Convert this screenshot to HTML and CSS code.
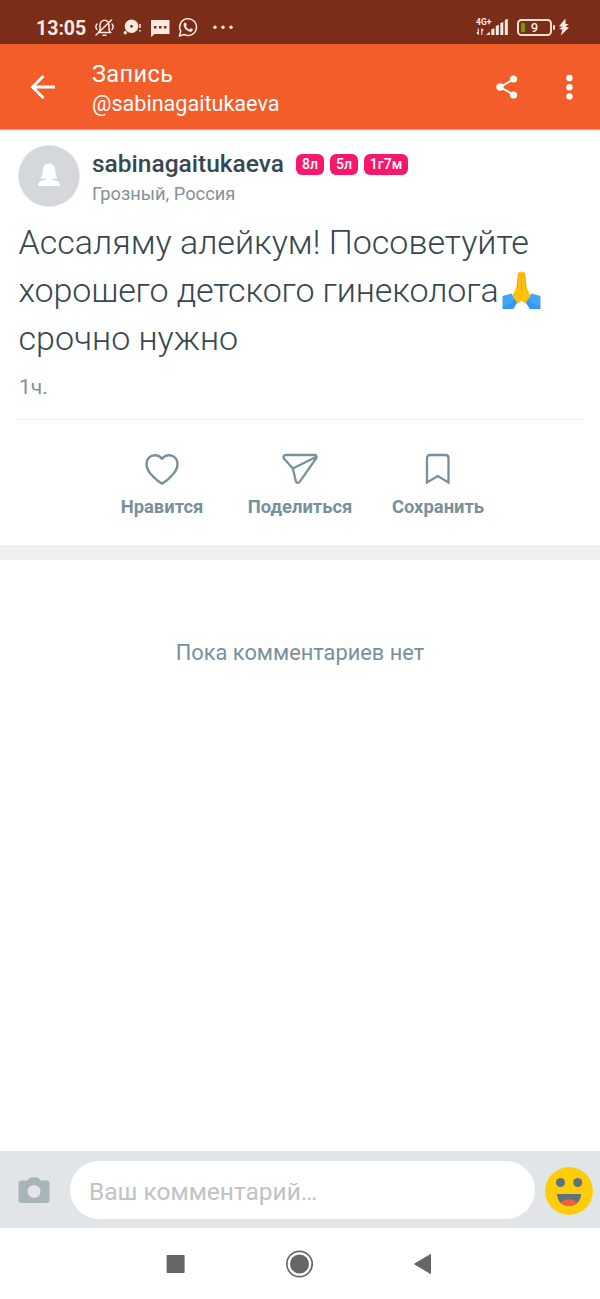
FILE: index.html
```html
<!DOCTYPE html>
<html lang="ru">
<head>
<meta charset="utf-8">
<title>Запись</title>
<link rel="stylesheet" href="styles.css">
</head>
<body>
<div class="screen">
  <div class="status">
    <span class="clock">13:05</span>
    <svg class="status-left" width="142" height="24" viewBox="94 16 142 24">
      <g fill="none" stroke="#fbe9e2" stroke-width="1.500" stroke-linecap="round">
        <path d="M98.500 32.500h12l-1.500-2.500v-4.500c0-7-9-7-9 0v4.500zM96 35l15.500-15M97 24c-1.500 1.500-1.500 4 0 5.500M112 24c1.500 1.500 1.500 4 0 5.500M103 35.300h3"/>
      </g>
      <circle cx="131.500" cy="26.300" r="6.800" fill="#fbe9e2"/><circle cx="131.500" cy="26.300" r="1.400" fill="#7b2d17"/>
      <circle cx="125.300" cy="32.700" r="1.700" fill="#fbe9e2"/>
      <path d="M140 24v4M140 30v1.500" stroke="#fbe9e2" stroke-width="1.500"/>
      <path d="M151 20h18.500v14H154.500l-3.500 3z" fill="#fbe9e2"/>
      <path d="M153.900 26h2.600v2.600h-2.600zM158.900 26h2.600v2.600h-2.600zM163.900 26h2.600v2.600h-2.600z" fill="#7b2d17"/>
      <path d="M179.400 36l1.400-4.700a8.400 8.400 0 1 1 3.300 3.200z" fill="none" stroke="#fbe9e2" stroke-width="1.500" stroke-linejoin="round"/>
      <path d="M184.300 22.900c.7-.7 1.500-.6 1.800.1l.7 1.700c.2.500-.6 1.200-.9 1.600.8 1.600 2 2.600 3.500 3.200.5-.5 1-1.500 1.500-1.300l1.700.9c.7.400-.1 2-.8 2.300-2 .8-4.300-.4-5.800-1.900-1.600-1.600-3.400-4.600-1.700-6.600z" fill="#fbe9e2"/>
      <g fill="#fbe9e2"><circle cx="215" cy="27.300" r="1.700"/><circle cx="223" cy="27.300" r="1.700"/><circle cx="231" cy="27.300" r="1.700"/></g>
    </svg>
    <div class="network">
      <span class="net-type">4G+</span>
      <svg width="34" height="18" viewBox="475 18 34 18">
        <path d="M478.300 28.500v6M478.800 34.500l-2-2M481.800 34.700v-6M481.300 28.700l2 2" stroke="#fbe9e2" stroke-width="1.100" fill="none"/>
        <path d="M486 35l3.800-3.500V35zM491.300 29.500l3.100-1.200V35h-3.100zM495.800 26l3-1.200V35h-3zM500.300 23.200l3-1.500V35h-3zM504.800 20l3-1.300V35h-3z" fill="#fbe9e2"/>
      </svg>
    </div>
    <div class="battery"><span>9</span></div>
    <svg class="bolt" width="14" height="18" viewBox="557 18 14 18"><path d="M565.500 18.500l-6.500 7.800 3.500.5-3.500 2.300 3.400.5-1.600 6 8.200-8-3.600-.8 3.400-2.600-3.300-.3z" fill="#fbe9e2"/></svg>
  </div>

  <header class="appbar">
    <svg class="back" width="26" height="26" viewBox="0 0 26 26"><path d="M13.500 2L2.500 13l11 11M3 13h22" fill="none" stroke="#fff" stroke-width="2.900"/></svg>
    <div class="titles"><div class="title">Запись</div><div class="subtitle">@sabinagaitukaeva</div></div>
    <svg class="share" width="22" height="24" viewBox="0 0 22 24"><path d="M18 4L4 12l14 8" fill="none" stroke="#fff" stroke-width="2"/><g fill="#fff"><circle cx="17.600" cy="4" r="3.600"/><circle cx="4" cy="12" r="3.700"/><circle cx="17.600" cy="20" r="3.600"/></g></svg>
    <svg class="more" width="8" height="26" viewBox="0 0 8 26"><g fill="#fff"><circle cx="4.400" cy="4" r="3.200"/><circle cx="4.400" cy="13.200" r="3.200"/><circle cx="4.400" cy="22.400" r="3.200"/></g></svg>
  </header>

  <article class="post">
    <div class="author">
      <svg width="62" height="62" viewBox="0 0 62 62"><circle cx="31" cy="31" r="30.700" fill="#d5d8da"/><path d="M31 18.500c-4.200 0-6.200 3.200-6.200 7.300 0 4-1.800 6.200-1.800 7.200 0 .8 1.500.7 4.800.7v1.200c-4.500.7-7.800 1.400-7.800 6.100h22c0-4.700-3.300-5.400-7.800-6.100v-1.200c3.300 0 4.800.1 4.800-.7 0-1-1.800-3.200-1.800-7.200 0-4.100-2-7.300-6.200-7.300z" fill="#fff"/></svg>
      <div class="who">
        <div class="name-row"><span class="name">sabinagaitukaeva</span><span class="badge">8л</span><span class="badge">5л</span><span class="badge wide">1г7м</span></div>
        <div class="place">Грозный, Россия</div>
      </div>
    </div>
    <div class="body">
      <div class="l1">Ассаляму алейкум! Посоветуйте</div>
      <div class="l2"><span>хорошего детского гинеколога</span><svg class="pray" width="39" height="39" viewBox="0 0 39 39"><path d="M.5 25l9-2.500 6 8.500-4.500 7H.5z" fill="#42a5f5"/><path d="M38.500 25l-9-2.500-6 8.500 4.500 7h10.500z" fill="#42a5f5"/><path d="M1 35c5-1 9-3 12-6.500l2.500 2.500-4.500 7H1zM38 35c-5-1-9-3-12-6.500L23.500 31l4.500 7h10z" fill="#3597ef"/><path d="M16.500 1.500c1-1.300 2.300-1.200 3 .2.700-1.400 2-1.500 3-.2l2.200 15 3.800 8.500-5.500 7.500-3.500-3-3.500 3-5.500-7.500 3.800-8.500z" fill="#ffc107"/><path d="M19.500 2v18M16.500 2.500l-1.200 15M22.500 2.500l1.200 15" stroke="#eea405" stroke-width="1.100" fill="none"/></svg></div>
      <div class="l3">срочно нужно</div>
    </div>
    <div class="time">1ч.</div>
    <div class="actions">
      <div class="action"><svg width="36" height="34" viewBox="0 0 36 34"><path d="M18 31.500C16.500 31 2.500 21.500 2.500 12.500 2.500 3 13 .5 18 6.700 23 .5 33.500 3 33.500 12.500 33.500 21.500 19.500 31 18 31.500z" fill="none" stroke="#78909c" stroke-width="2.400" stroke-linejoin="round"/></svg><span class="a1">Нравится</span></div>
      <div class="action"><svg width="36" height="34" viewBox="0 0 36 34"><path d="M3.800 3h28.700c2.300 0 2.700 2 1.600 3.400L17.800 29.600c-1.400 2-3.600 1.500-4-.7L10.800 16.500 2 6.500C.8 5 1.800 3 3.800 3zM10.800 16.500L34 5" fill="none" stroke="#78909c" stroke-width="2.300" stroke-linejoin="round"/></svg><span class="a2">Поделиться</span></div>
      <div class="action"><svg width="36" height="34" viewBox="0 0 36 34"><path d="M7 30.500V6q0-3 3-3h15.500q3 0 3 3v24.500L17.800 24z" fill="none" stroke="#78909c" stroke-width="2.300" stroke-linejoin="miter"/></svg><span class="a3">Сохранить</span></div>
    </div>
  </article>

  <section class="comments">Пока комментариев нет</section>

  <footer class="composer">
    <svg class="camera" width="32" height="28" viewBox="0 0 32 28"><path fill-rule="evenodd" d="M3.500 4.500h5.700l3-3h7.600l3 3h5.700q3 0 3 3v16.500q0 3-3 3h-25q-3 0-3-3V7.500q0-3 3-3zM16 8.900a6.500 6.500 0 1 0 0 13a6.500 6.500 0 1 0 0-13z" fill="#a7b4ba"/></svg>
    <div class="field">Ваш комментарий…</div>
    <svg class="smile" width="48" height="48" viewBox="0 0 48 48"><circle cx="24" cy="24" r="23.900" fill="#ffcc09"/><g fill="#5d737c"><circle cx="15.500" cy="15.500" r="4.500"/><circle cx="32.700" cy="15.500" r="4.500"/><path d="M12 27h24c0 7-5 12-12 12s-12-5-12-12z"/></g><path d="M15.800 35.800c4-4.600 12.400-4.600 16.400 0C28 40.100 20 40.100 15.800 35.800z" fill="#f1603a"/></svg>
  </footer>
  <nav class="navbar">
    <svg width="28" height="28" viewBox="0 0 28 28"><rect x="5.600" y="5" width="18" height="18" rx=".7" fill="#666"/></svg>
    <svg width="28" height="28" viewBox="0 0 28 28"><circle cx="14.500" cy="14" r="12.700" fill="none" stroke="#666" stroke-width="1.700"/><circle cx="14.500" cy="14" r="9.500" fill="#666"/></svg>
    <svg width="28" height="28" viewBox="0 0 28 28"><path d="M21.500 4.500v19L5.500 14z" fill="#666" stroke="#666" stroke-width="1" stroke-linejoin="round"/></svg>
  </nav>
</div>
</body>
</html>
```
FILE: styles.css
```css
* { box-sizing: border-box; }
body { margin: 0; background: #fff; font-family: Roboto, "Noto Sans", sans-serif; }
svg { display: block; flex: none; }
.screen { width: 600px; height: 1299px; display: flex; flex-direction: column; overflow: hidden; white-space: nowrap; }
.status { flex: none; height: 44px; background: #7b2d17; color: #fbe9e2; display: flex; align-items: flex-start; padding-left: 36px; }
.clock { width: 58px; font-size: 19.500px; font-weight: 700; line-height: 24px; padding-top: 17px; }
.status-left { margin-top: 16px; }
.network { margin: 18px 0 0 239px; position: relative; }
.net-type { position: absolute; left: 1px; top: -1px; font-size: 8.500px; line-height: 10px; font-weight: 700; }
.battery { position: relative; width: 35px; height: 17px; margin: 19px 0 0 8px; border: 2px solid #fbe0d5; border-radius: 4.500px; font-size: 13px; line-height: 14px; font-weight: 500; text-align: center; }
.battery::before { content: ""; position: absolute; left: 2px; top: 2px; width: 4px; height: 9px; background: #6f9b0d; border-radius: 1px; }
.battery::after { content: ""; position: absolute; right: -5px; top: 4px; width: 2px; height: 5px; background: #fbe0d5; border-radius: 1px; }
.bolt { margin: 18px 0 0 5px; }
.appbar { flex: none; height: 86px; background: #f35d2a; color: #fff; display: flex; align-items: center; padding-left: 30px; border-bottom: 1px solid #f69a78; box-shadow: 0 1px 3px rgba(120, 80, 160, .15); }
.titles { margin-left: 36px; width: 404px; padding-top: 4px; }
.title { font-size: 23.500px; line-height: 30px; letter-spacing: .4px; }
.subtitle { font-size: 21.600px; line-height: 30px; }
.more { margin-left: 47px; }
.post { flex: none; height: 430px; padding: 15px 18px 0; border-bottom: 15px solid #eff0f2; }
.author { display: flex; height: 62px; }
.who { margin-left: 12px; padding-top: 4px; }
.name-row { display: flex; align-items: center; height: 30px; }
.name { width: 204px; font-size: 24.500px; line-height: 30px; font-weight: 500; color: #37474f; }
.badge { width: 28px; height: 21px; margin-right: 6px; border-radius: 6px; background: #f7176b; color: #fff; font-size: 14px; line-height: 21px; font-weight: 500; text-align: center; }
.badge.wide { width: 44px; }
.place { font-size: 18.300px; line-height: 30px; color: #829299; }
.body { margin-top: 11px; padding-left: .5px; font-size: 34px; line-height: 48px; font-weight: 300; color: #37474f; }
.l2 { display: flex; height: 48px; letter-spacing: -.11px; }
.pray { margin: 5px 0 0 3px; }
.time { margin-top: 11px; height: 47px; border-bottom: 1px solid #eceeef; font-size: 21px; line-height: 28px; color: #829299; padding-left: 1px; }
.actions { display: flex; padding: 32px 0 0 75px; }
.action { width: 138px; display: flex; flex-direction: column; align-items: center; color: #78909c; font-size: 18.400px; line-height: 26px; font-weight: 700; }
.action span { margin-top: 8px; }
.comments { flex: 1; padding-top: 78px; text-align: center; font-size: 21.800px; line-height: 30px; color: #78909c; }
.composer { flex: none; height: 77px; background: #e1e5e7; display: flex; align-items: center; padding: 1px 7px 0 18px; }
.field { width: 465px; height: 58px; margin: 0 10px 0 20px; padding-left: 19px; border-radius: 29px; background: #fff; color: #bec3c6; font-size: 24.500px; line-height: 62px; }
.smile { margin-top: 1px; }
.navbar { flex: none; height: 71px; display: flex; gap: 96px; padding: 22px 0 0 161px; }
```
